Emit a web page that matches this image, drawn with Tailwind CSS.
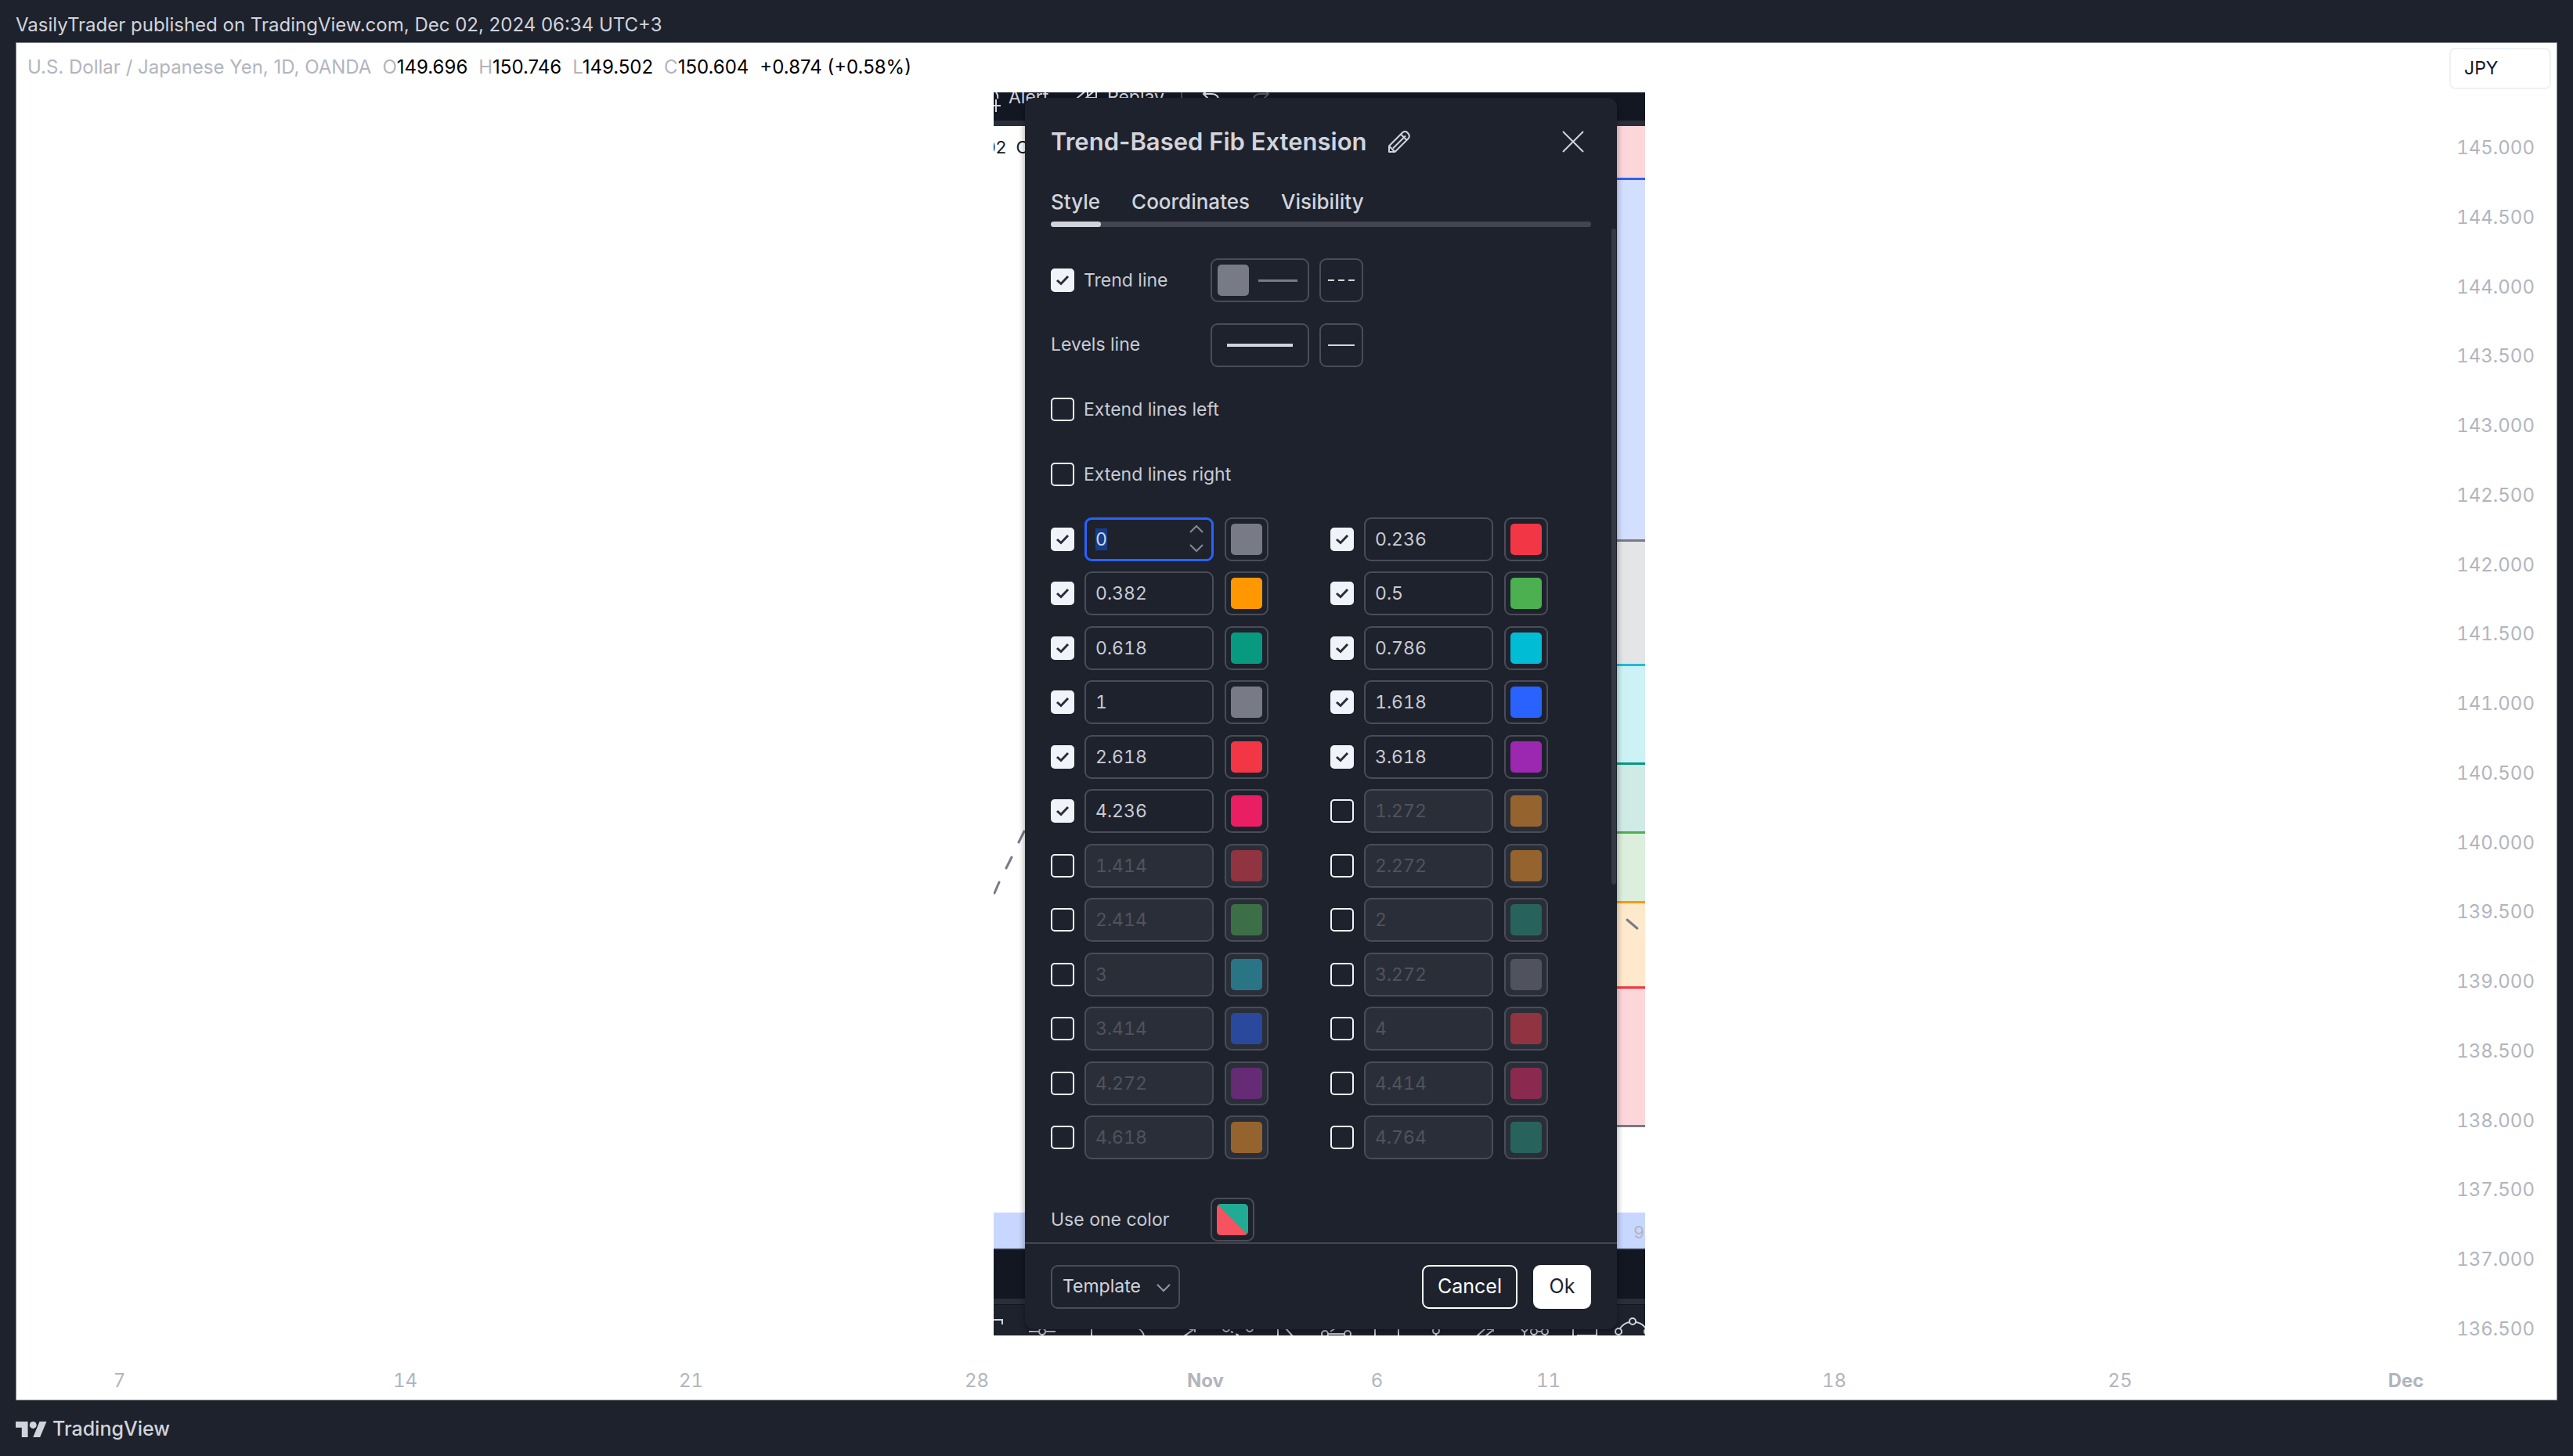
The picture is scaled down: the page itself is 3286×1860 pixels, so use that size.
<!DOCTYPE html>
<html lang="en">
  <head>
    <meta charset="UTF-8" />
    <title>USDJPY - TradingView</title>
    <script src="https://cdn.jsdelivr.net/npm/@tailwindcss/browser@4"></script>
  </head>

  <body class="font-['Inter',sans-serif] bg-[#1e222d]">
    <div class="flex flex-col min-h-screen">
      <header class="flex items-center h-[54px] px-5 pt-[10px] text-[24px] text-[#d1d4dc]">
        VasilyTrader published on TradingView.com, Dec 02, 2024 06:34 UTC+3
      </header>

      <main class="flex flex-col flex-1 mx-5 bg-white border border-[#868993]">
        <div class="flex items-start justify-between h-[63px] pt-[6px] pl-[14px] pr-[7px]">
          <div class="flex gap-[14px] mt-[3px] text-[24px] leading-[44px] text-[#b2b5be] whitespace-nowrap">
            <span>U.S. Dollar / Japanese Yen, 1D, OANDA</span>
            <span>O<span class="text-black">149.696</span></span>
            <span>H<span class="text-black">150.746</span></span>
            <span>L<span class="text-black">149.502</span></span>
            <span>C<span class="text-black">150.604</span></span>
            <span class="text-black">+0.874 (+0.58%)</span>
          </div>
          <button class="w-[130px] h-[53px] pl-[17px] text-left text-[23px] text-[#131722] border-2 border-[#f0f0f6] rounded-lg">JPY</button>
        </div>

        <div class="flex-1 grid grid-cols-[1248fr_832px_1164fr]">
          <div></div>

          <section class="relative flex flex-col overflow-hidden bg-white">
            <!-- top toolbar behind the dialog -->
            <div class="h-[43px] shrink-0 bg-[#131722] border-b-[7px] border-[#2a2e39] overflow-hidden text-[#d1d4dc]">
              <svg width="832" height="36" viewBox="0 0 832 36" fill="none" stroke="#d1d4dc" stroke-width="2">
                <path d="M0 17h9M3 9v16M3 0q3 3 2 8" />
                <text x="19" y="14" fill="#d1d4dc" stroke="none" font-size="23">Alert</text>
                <path d="M120 -4 107 7l13 11M131 -4 118 7h13M120 -4v14M131 -4v14" />
                <text x="145" y="14" fill="#d1d4dc" stroke="none" font-size="23">Replay</text>
                <path d="M240 0v30" stroke="#434651" />
                <path d="M274 -4l-6 6 6 6M268 2h11q8 0 9 10" />
                <path d="M345 -4l6 6-6 6M351 2h-11q-8 0-9 10" stroke="#50535e" />
              </svg>
            </div>

            <div class="flex flex-1 justify-between">
              <svg width="60" height="1388" viewBox="0 0 60 1388" fill="none">
                <text x="-11" y="35" font-size="22" fill="#131722">92&#160;&#160;C</text>
                <path d="M39 901l-7 14M23 934l-7 14M7 966l-6 14" stroke="#787b86" stroke-width="3" stroke-linecap="round" />
              </svg>
              <div class="relative w-[40px]">
                <div class="h-[69px] bg-[#fcd6d9] border-b-[3px] border-[#2962ff]"></div>
                <div class="h-[462px] bg-[#d3dffe] border-b-[3px] border-[#787b86]"></div>
                <div class="h-[159px] bg-[#e4e5e7] border-b-[3px] border-[#1fbcd3]"></div>
                <div class="h-[126px] bg-[#ccf2f5] border-b-[3px] border-[#089981]"></div>
                <div class="h-[88px] bg-[#d0ebe6] border-b-[3px] border-[#4caf50]"></div>
                <div class="h-[89px] bg-[#dbefdc] border-b-[3px] border-[#ff9800]"></div>
                <div class="h-[109px] bg-[#ffe9cc] border-b-[3px] border-[#f23645]"></div>
                <div class="h-[177px] bg-[#fcd6d9] border-b-[3px] border-[#787b86]"></div>
                <svg class="absolute top-[1010px] left-[14px]" width="20" height="18" viewBox="0 0 20 18">
                  <path d="M3 4l13 11" stroke="#787b86" stroke-width="3" stroke-linecap="round" />
                </svg>
              </div>
            </div>

            <div class="h-[46px] shrink-0 flex items-center justify-end pr-[1px] pt-1 bg-[#c8d7ff] text-[22px] text-[#b2b5be]">9</div>
            <div class="h-[71px] shrink-0 bg-[#131722] border-t-2 border-b-[7px] border-[#2a2e39]"></div>

            <!-- drawing toolbar cut off by the lower edge -->
            <div class="h-[40px] shrink-0 pt-[2px] bg-[#1e222d] border-t border-[#131722]">
              <svg width="832" height="38" viewBox="0 0 832 38" fill="none" stroke="#d1d4dc" stroke-width="2">
                <path d="M0 17H11V23" />
                <path d="M45 32H58M66 32H79M125 28V38M185 28Q191 32 192 38" />
                <circle cx="62" cy="32" r="4" />
                <path d="M243 38L256 29M250 29h7v4" />
                <circle cx="297" cy="28" r="4" />
                <circle cx="327" cy="28" r="4" />
                <path d="M303 32l18 9M310 37l6 -3" stroke-dasharray="3 4" />
                <path d="M363 28V38M373 28L382 38" />
                <circle cx="423" cy="35" r="4" />
                <circle cx="452" cy="35" r="4" />
                <path d="M427 35H448M430 32l6-4M487 28V38M517 28V38" />
                <circle cx="565" cy="31" r="4" />
                <path d="M565 35V38M617 38L628 28M628 38L638 30M630 29h8v3M674 29l4 4 4-4M678 33V38" />
                <circle cx="690" cy="32" r="4" />
                <circle cx="704" cy="32" r="4" />
                <path d="M694 32H700M690 36V38M740 28V38M770 28V38M745 37H770" />
                <circle cx="816" cy="19" r="4" />
                <circle cx="798" cy="32" r="4" />
                <circle cx="835" cy="32" r="4" />
                <path d="M800 28Q805 21 812 20M820 20Q828 21 833 28" />
              </svg>
            </div>

            <div
              role="dialog"
              aria-labelledby="dialog-title"
              class="absolute top-[7px] bottom-[8px] left-[40px] right-[36px] flex flex-col bg-[#1e222d] rounded-xl shadow-[0_4px_8px_rgba(0,0,0,0.4)] text-[#d1d4dc]"
            >
              <div class="flex items-center h-[48px] mt-8 px-[33px]">
                <h1 id="dialog-title" class="text-[31px] leading-[48px] font-semibold whitespace-nowrap">Trend-Based Fib Extension</h1>
                <button aria-label="Rename" class="ml-7">
                  <svg width="28" height="28" viewBox="0 0 28 28" fill="none" stroke="currentColor" stroke-width="2">
                    <path d="M1 27V19.500L18.500 2Q22 -0.500 25 3T26 9.500L8.500 27ZM1 19.500L8.500 27M6 22.500L22 6.500M16 4.500L23.500 12" stroke-linejoin="round" />
                  </svg>
                </button>
                <button aria-label="Close" class="ml-auto mr-[9px]">
                  <svg width="28" height="28" viewBox="0 0 28 28" fill="none" stroke="currentColor" stroke-width="2">
                    <path d="M1 1L27 27M27 1L1 27" />
                  </svg>
                </button>
              </div>

              <div role="tablist" class="flex gap-10 mt-[37px] mx-[33px] text-[26px] leading-8 font-medium">
                <button role="tab" aria-selected="true">Style</button>
                <button role="tab">Coordinates</button>
                <button role="tab">Visibility</button>
              </div>
              <div class="h-[7px] mt-[9px] mx-[33px] bg-[#434651] rounded-full">
                <div class="w-16 h-full bg-[#d1d4dc] rounded-full"></div>
              </div>

              <div class="relative flex-1 min-h-0 overflow-hidden pt-10 pl-[33px] text-[23px] text-[#c8cbd3]">
                <div class="absolute top-[2px] right-[1px] w-[6px] h-[838px] bg-[#363a45] rounded-full"></div>

                <div class="flex flex-col justify-between h-[304px]">
                  <div class="flex items-center h-14">
                    <label class="flex items-center gap-3 w-[204px]">
                      <span class="grid place-items-center">
                        <input type="checkbox" checked class="col-start-1 row-start-1 appearance-none size-[30px] rounded-[5px] border-2 border-[#f0f3fa] checked:bg-[#f0f3fa]" />
                        <svg class="col-start-1 row-start-1 pointer-events-none" width="18" height="14" viewBox="0 0 18 14" fill="none" stroke="#2a2e39" stroke-width="3"><path d="M2 7l5 4.500L16 2" /></svg>
                      </span>
                      Trend line
                    </label>
                    <button aria-label="Trend line color and width" class="flex items-center gap-3 w-[126px] h-14 px-[7px] mr-[13px] border-2 border-[#4a4d57] rounded-[9px]">
                      <span class="size-10 rounded-[5px] bg-[#787b86]"></span>
                      <span class="w-[50px] h-[3px] bg-[#787b86]"></span>
                    </button>
                    <button aria-label="Trend line style" class="flex items-center justify-center gap-[5px] size-14 border-2 border-[#4a4d57] rounded-[9px]">
                      <span class="w-2 h-[2px] bg-[#d1d4dc]"></span>
                      <span class="w-2 h-[2px] bg-[#d1d4dc]"></span>
                      <span class="w-2 h-[2px] bg-[#d1d4dc]"></span>
                    </button>
                  </div>
                  <div class="flex items-center h-14">
                    <span class="w-[204px]">Levels line</span>
                    <button aria-label="Levels line width" class="flex items-center justify-center w-[126px] h-14 mr-[13px] border-2 border-[#4a4d57] rounded-[9px]">
                      <span class="w-[84px] h-1 bg-[#d1d4dc]"></span>
                    </button>
                    <button aria-label="Levels line style" class="flex items-center justify-center size-14 border-2 border-[#4a4d57] rounded-[9px]">
                      <span class="w-[34px] h-[2px] bg-[#d1d4dc]"></span>
                    </button>
                  </div>
                  <label class="flex items-center gap-3 h-14">
                    <input type="checkbox" class="appearance-none size-[30px] rounded-[5px] border-2 border-[#f0f3fa] checked:bg-[#f0f3fa]" />
                    Extend lines left
                  </label>
                  <label class="flex items-center gap-3 h-14">
                    <input type="checkbox" class="appearance-none size-[30px] rounded-[5px] border-2 border-[#f0f3fa] checked:bg-[#f0f3fa]" />
                    Extend lines right
                  </label>
                </div>

                <div id="levels" class="grid grid-cols-[357px_278px] content-between h-[820px] mt-[27px]"></div>

                <div class="flex items-center h-14 mt-[49px]">
                  <span class="w-[204px]">Use one color</span>
                  <button aria-label="Use one color" class="grid place-items-center size-14 border-2 border-[#4a4d57] rounded-[9px]">
                    <span class="size-10 rounded-[5px] bg-[linear-gradient(to_top_right,#f7525f_50%,#22ab94_50%)]"></span>
                  </button>
                </div>
              </div>

              <div class="flex items-center h-[111px] px-[33px] border-t-2 border-[#434651]">
                <div class="relative">
                  <select aria-label="Template" class="appearance-none w-[165px] h-14 pl-[13px] text-[23px] border-2 border-[#4a4d57] rounded-[9px]">
                    <option>Template</option>
                  </select>
                  <svg class="absolute top-[24px] right-[12px] pointer-events-none" width="18" height="11" viewBox="0 0 18 11" fill="none" stroke="#9598a1" stroke-width="2"><path d="M1 1l8 8 8-8" /></svg>
                </div>
                <button class="ml-auto w-[122px] h-14 text-[25px] text-white border-2 border-white rounded-[9px]">Cancel</button>
                <button class="ml-5 w-[74px] h-14 text-[25px] text-[#1e222d] bg-white rounded-[9px]">Ok</button>
              </div>
            </div>
          </section>

          <div class="flex flex-col justify-between items-end pt-[63px] pr-7 text-[24px] leading-4 tabular-nums text-[#b2b5be]">
            <span>145.000</span>
            <span>144.500</span>
            <span>144.000</span>
            <span>143.500</span>
            <span>143.000</span>
            <span>142.500</span>
            <span>142.000</span>
            <span>141.500</span>
            <span>141.000</span>
            <span>140.500</span>
            <span>140.000</span>
            <span>139.500</span>
            <span>139.000</span>
            <span>138.500</span>
            <span>138.000</span>
            <span>137.500</span>
            <span>137.000</span>
            <span>136.500</span>
          </div>
        </div>

        <!-- one column per daily bar -->
        <div class="grid grid-cols-[repeat(41,minmax(0,1fr))] justify-items-center items-center h-[82px] pt-[34px] pl-[95px] pr-[156px] text-[24px] tabular-nums text-[#b2b5be]">
          <span class="col-start-1">7</span>
          <span class="col-start-6">14</span>
          <span class="col-start-11">21</span>
          <span class="col-start-16">28</span>
          <span class="col-start-20 font-bold">Nov</span>
          <span class="col-start-23">6</span>
          <span class="col-start-26">11</span>
          <span class="col-start-31">18</span>
          <span class="col-start-36">25</span>
          <span class="col-start-41 font-bold">Dec</span>
        </div>
      </main>

      <footer class="flex items-center gap-[7px] h-[71px] px-5 pt-[3px] text-[25px] font-medium text-[#d1d4dc]">
        <svg width="40" height="20" viewBox="0 4 36 18" fill="currentColor">
          <path d="M14 22H7V11H0V4h14v18zM28 22h-8l7.500-18h8L28 22z" />
          <circle cx="20" cy="8" r="4" />
        </svg>
        TradingView
      </footer>
    </div>

    <script>
      // value, swatch color, enabled
      const levels = [
        ['0', '#787b86', true],
        ['0.236', '#f23645', true],
        ['0.382', '#ff9800', true],
        ['0.5', '#4caf50', true],
        ['0.618', '#089981', true],
        ['0.786', '#00bcd4', true],
        ['1', '#787b86', true],
        ['1.618', '#2962ff', true],
        ['2.618', '#f23645', true],
        ['3.618', '#9c27b0', true],
        ['4.236', '#e91e63', true],
        ['1.272', '#95632d', false],
        ['1.414', '#8f3440', false],
        ['2.272', '#95632d', false],
        ['2.414', '#3c6f45', false],
        ['2', '#27635c', false],
        ['3', '#2a7585', false],
        ['3.272', '#50535e', false],
        ['3.414', '#2a489c', false],
        ['4', '#8f3440', false],
        ['4.272', '#652b75', false],
        ['4.414', '#8a2a4e', false],
        ['4.618', '#95632d', false],
        ['4.764', '#27635c', false],
      ];

      const check =
        '<svg class="col-start-1 row-start-1 pointer-events-none" width="18" height="14" viewBox="0 0 18 14" fill="none" stroke="#2a2e39" stroke-width="3"><path d="M2 7l5 4.500L16 2" /></svg>';
      const spinner = `
        <span class="absolute top-[9px] right-[13px] flex flex-col gap-[14px]">
          <button aria-label="Increase"><svg width="18" height="11" viewBox="0 0 18 11" fill="none" stroke="#868993" stroke-width="2"><path d="M1 10l8-8 8 8" /></svg></button>
          <button aria-label="Decrease"><svg width="18" height="11" viewBox="0 0 18 11" fill="none" stroke="#868993" stroke-width="2"><path d="M1 1l8 8 8-8" /></svg></button>
        </span>`;

      document.getElementById('levels').innerHTML = levels
        .map(
          ([value, color, on], i) => `
          <div class="flex items-center h-14">
            <span class="grid place-items-center mr-[13px]">
              <input type="checkbox" aria-label="Show level ${value}" ${on ? 'checked' : ''} class="col-start-1 row-start-1 appearance-none size-[30px] rounded-[5px] border-2 border-[#f0f3fa] checked:bg-[#f0f3fa]" />
              ${on ? check : ''}
            </span>
            <span class="relative mr-[14px]">
              <input type="text" aria-label="Level" value="${value}" ${on ? '' : 'disabled'} class="block w-[165px] h-14 pl-3 text-[23px] tabular-nums border-2 border-[#4a4d57] rounded-[9px] outline-none selection:bg-[#143d8f] selection:text-[#d1d4dc] focus:border-[3px] focus:pl-[11px] focus:border-[#2962ff] disabled:bg-[#2a2e39] disabled:text-[#50535e]" />
              ${i === 0 ? spinner : ''}
            </span>
            <button aria-label="Level color" ${on ? '' : 'disabled'} class="grid place-items-center size-14 border-2 border-[#4a4d57] rounded-[9px] disabled:bg-[#2a2e39]">
              <span class="size-10 rounded-[5px]" style="background: ${color}"></span>
            </button>
          </div>`
        )
        .join('');

      document.querySelector('#levels input[type="text"]').select();
    </script>
  </body>
</html>
